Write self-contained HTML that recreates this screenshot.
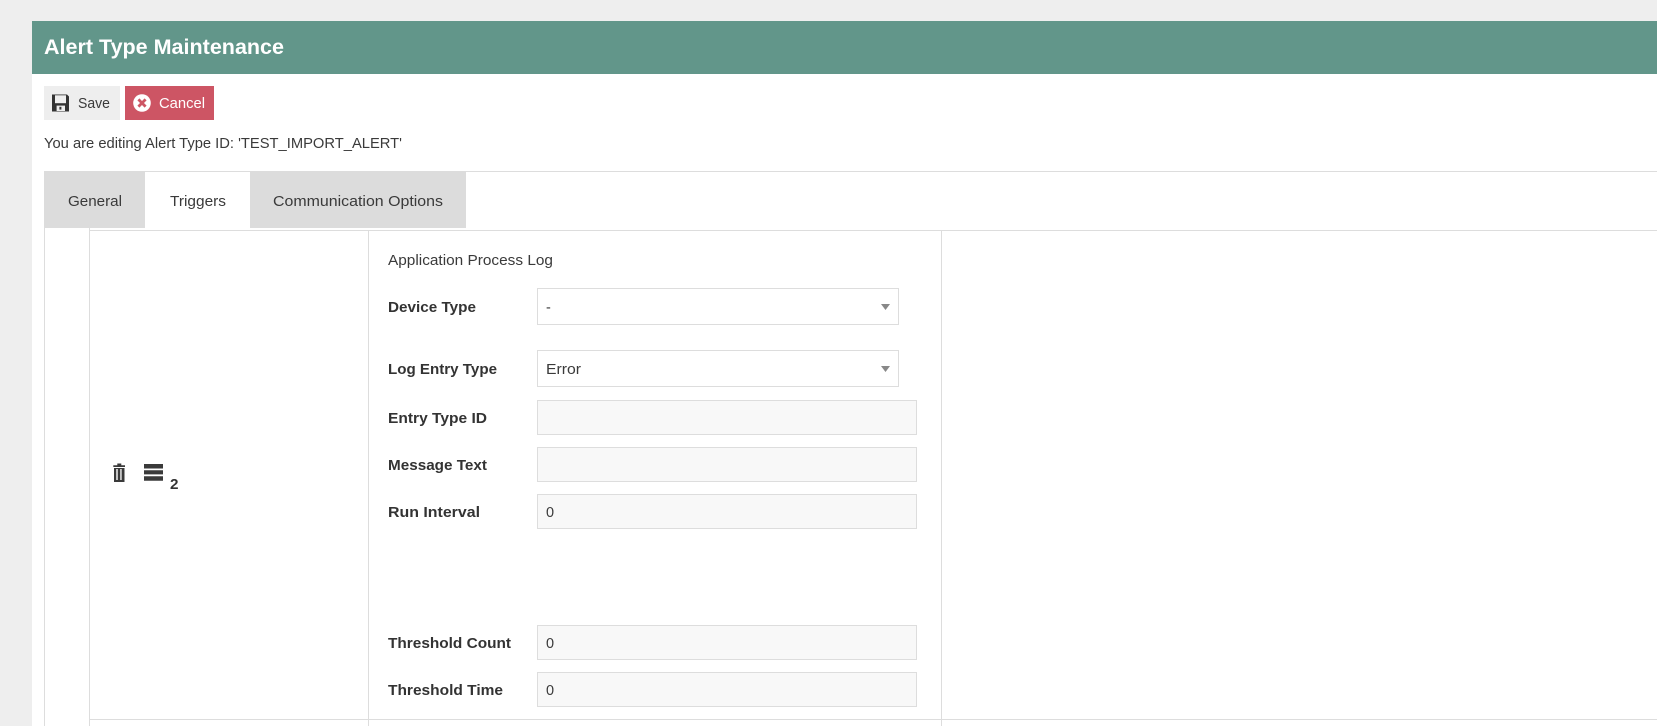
<!DOCTYPE html>
<html lang="en">
<head>
<meta charset="utf-8">
<title>Alert Type Maintenance</title>
<style>
html,body{margin:0;padding:0;width:1657px;height:726px;overflow:hidden;background:#eeeeee}
.a{position:absolute;box-sizing:border-box}
.in{background:#f8f8f8;border:1px solid #dddddd;left:537px;width:380px;height:35px}
.se{background:#fff;border:1px solid #dddddd;left:537px;width:362px;height:37px}
.l{background:#dddddd}
svg{position:absolute;left:0;top:0}
text{font-family:"Liberation Sans",Arial,sans-serif;fill:#3a3a3a;font-size:14.5px}
.b{font-weight:bold;fill:#333}
</style>
</head>
<body>
<div class="a" style="left:32px;top:21px;width:1625px;height:705px;background:#fff"></div>
<div class="a" style="left:32px;top:21px;width:1625px;height:53px;background:#62968a"></div>
<div class="a" style="left:44px;top:86px;width:76px;height:34px;background:#eeeeee"></div>
<div class="a" style="left:125px;top:86px;width:89px;height:34px;background:#cd5564"></div>

<div class="a l" style="left:44px;top:171px;width:1613px;height:1px"></div>
<div class="a l" style="left:145px;top:230px;width:1512px;height:1px"></div>
<div class="a" style="left:44px;top:171px;width:101px;height:57px;background:#dcdcdc"></div>
<div class="a" style="left:250px;top:171px;width:216px;height:57px;background:#dcdcdc"></div>
<div class="a l" style="left:89px;top:230px;width:1568px;height:1px"></div>
<div class="a l" style="left:44px;top:228px;width:1px;height:498px"></div>
<div class="a l" style="left:89px;top:228px;width:1px;height:498px"></div>
<div class="a l" style="left:368px;top:230px;width:1px;height:496px"></div>
<div class="a l" style="left:941px;top:230px;width:1px;height:496px"></div>
<div class="a l" style="left:89px;top:719px;width:1568px;height:1px"></div>

<div class="a se" style="top:288px"></div>
<div class="a se" style="top:350px"></div>
<div class="a in" style="top:400px"></div>
<div class="a in" style="top:447px"></div>
<div class="a in" style="top:494px"></div>
<div class="a in" style="top:625px"></div>
<div class="a in" style="top:672px"></div>

<svg width="1657" height="726" viewBox="0 0 1657 726" xmlns="http://www.w3.org/2000/svg">
  <text x="44" y="54" class="b" style="font-size:21.5px;fill:#fff" textLength="240" lengthAdjust="spacingAndGlyphs">Alert Type Maintenance</text>

  <!-- save icon -->
  <path fill="#333" d="M52 94.5H67L69 96.5V111.5H52Z"/>
  <path fill="#eeeeee" d="M55 95.3H66V103.2H55Z"/>
  <path fill="#eeeeee" d="M56.6 105.6H65V111H56.6Z"/>
  <path fill="#333" d="M59.4 106.8H61.4V109.6H59.4Z"/>
  <text x="78" y="108" textLength="32" lengthAdjust="spacingAndGlyphs">Save</text>

  <!-- cancel icon -->
  <circle cx="142" cy="103" r="8.8" fill="#fff"/>
  <path d="M138.4 99.4L145.6 106.6M145.6 99.4L138.4 106.6" stroke="#cd5564" stroke-width="2.8" fill="none"/>
  <text x="159" y="108" style="fill:#fff" textLength="46" lengthAdjust="spacingAndGlyphs">Cancel</text>

  <text x="44" y="148" textLength="358" lengthAdjust="spacingAndGlyphs">You are editing Alert Type ID: 'TEST_IMPORT_ALERT'</text>

  <text x="68" y="206" textLength="54" lengthAdjust="spacingAndGlyphs">General</text>
  <text x="170" y="206" textLength="56" lengthAdjust="spacingAndGlyphs">Triggers</text>
  <text x="273" y="206" textLength="170" lengthAdjust="spacingAndGlyphs">Communication Options</text>

  <!-- trash icon -->
  <path fill="#3a3a3a" d="M117.3 463.5H121.3V465.3H125V467H113.3V465.3H117.3Z"/>
  <path fill="#3a3a3a" fill-rule="evenodd" d="M114 468H124.5V482H114ZM116.3 469V480H117.7V469ZM120.3 469V480H121.6V469Z"/>
  <!-- bars icon -->
  <path fill="#3a3a3a" d="M144 464H163V468.5H144ZM144 470.3H163V474.4H144ZM144 476.3H163V480.7H144Z"/>
  <text x="170" y="489" class="b" textLength="8.5" lengthAdjust="spacingAndGlyphs">2</text>

  <text x="388" y="265" textLength="165" lengthAdjust="spacingAndGlyphs">Application Process Log</text>

  <text x="388" y="312" class="b" textLength="88" lengthAdjust="spacingAndGlyphs">Device Type</text>
  <text x="388" y="374" class="b" textLength="109" lengthAdjust="spacingAndGlyphs">Log Entry Type</text>
  <text x="388" y="423" class="b" textLength="99" lengthAdjust="spacingAndGlyphs">Entry Type ID</text>
  <text x="388" y="470" class="b" textLength="99" lengthAdjust="spacingAndGlyphs">Message Text</text>
  <text x="388" y="517" class="b" textLength="92" lengthAdjust="spacingAndGlyphs">Run Interval</text>
  <text x="388" y="648" class="b" textLength="123" lengthAdjust="spacingAndGlyphs">Threshold Count</text>
  <text x="388" y="695" class="b" textLength="115" lengthAdjust="spacingAndGlyphs">Threshold Time</text>

  <text x="546" y="312">-</text>
  <text x="546" y="374" textLength="35" lengthAdjust="spacingAndGlyphs">Error</text>
  <text x="546" y="517">0</text>
  <text x="546" y="648">0</text>
  <text x="546" y="695">0</text>

  <path fill="#888" d="M881 304H890L885.5 310ZM881 366H890L885.5 372Z"/>
</svg>
</body>
</html>
